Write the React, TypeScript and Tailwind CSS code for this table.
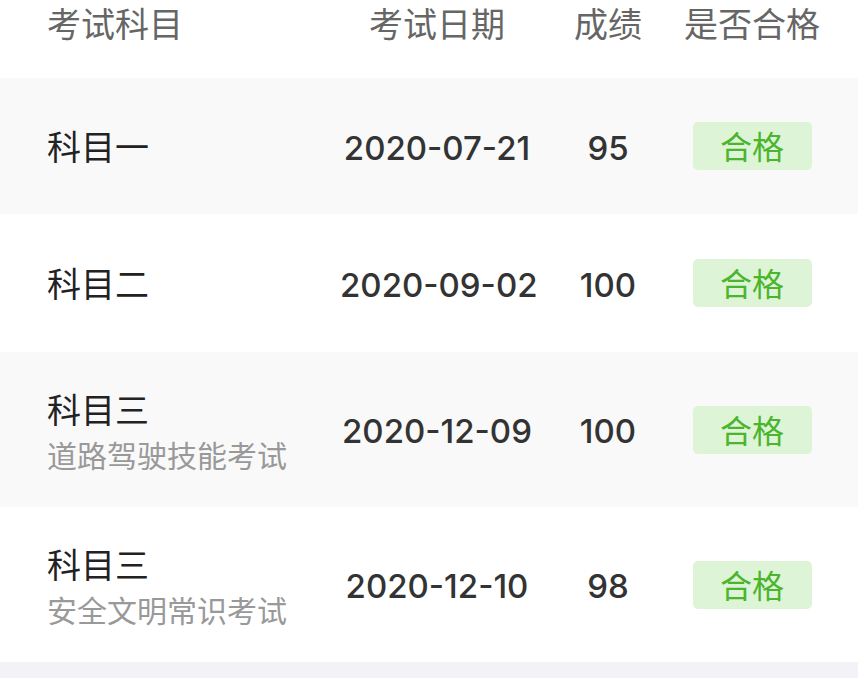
import React from "react";

const rows = [
  { title: "科目一", sub: "", date: "2020-07-21", score: "95", bg: "bg-[#f9f9f9]", h: "h-[136px]" },
  { title: "科目二", sub: "", date: "2020-09-02", score: "100", bg: "bg-white", h: "h-[138px]" },
  { title: "科目三", sub: "道路驾驶技能考试", date: "2020-12-09", score: "100", bg: "bg-[#f9f9f9]", h: "h-[155px]" },
  { title: "科目三", sub: "安全文明常识考试", date: "2020-12-10", score: "98", bg: "bg-white", h: "h-[155px]" },
];

export default function App() {
  return (
    <div
      className="w-[858px] h-[678px] overflow-hidden bg-white"
      style={{ fontFamily: '"Noto Sans CJK SC", sans-serif' }}
    >
      <div className="flex h-[78px] pl-[47px] pr-[36px] pt-[1px] text-[34px] leading-[44px] text-[#666] whitespace-nowrap">
        <div className="w-[293px]">考试科目</div>
        <div className="w-[194px] text-center">考试日期</div>
        <div className="w-[148px] text-center">成绩</div>
        <div className="w-[140px] text-center">是否合格</div>
      </div>
      {rows.map((r, i) => (
        <div key={i} className={`flex items-center pl-[47px] pr-[36px] whitespace-nowrap ${r.bg} ${r.h}`}>
          <div className="w-[293px] flex flex-col">
            <div className="text-[34px] leading-[46px] font-normal text-[#222]">{r.title}</div>
            {r.sub && (
              <div className="text-[30px] leading-[40px] text-[#999] mt-[2px]">{r.sub}</div>
            )}
          </div>
          <div
            className="w-[194px] text-center text-[33px] leading-[44px] font-medium text-[#333] pt-[3px]"
            style={{ fontFamily: "Inter, sans-serif" }}
          >
            {r.date}
          </div>
          <div
            className="w-[148px] text-center text-[33px] leading-[44px] font-medium text-[#333] pt-[3px]"
            style={{ fontFamily: "Inter, sans-serif" }}
          >
            {r.score}
          </div>
          <div className="w-[140px] flex justify-center">
            <div className="w-[119px] h-[48px] rounded-[5px] bg-[#def4d6] text-[#4ab52d] text-[32px] leading-[46px] text-center">
              合格
            </div>
          </div>
        </div>
      ))}
      <div className="h-[16px] bg-[#f2f2f7]" />
    </div>
  );
}
